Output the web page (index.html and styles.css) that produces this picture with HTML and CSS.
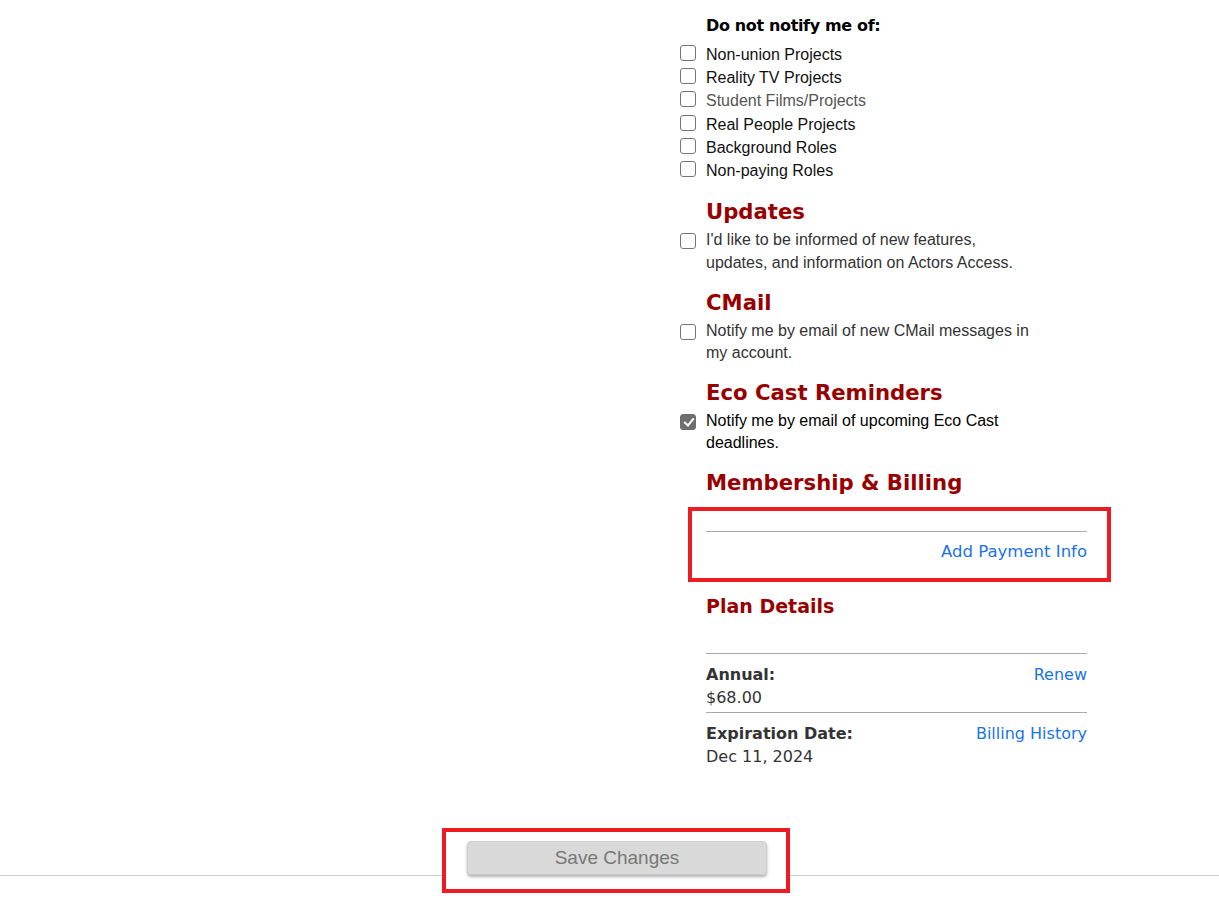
FILE: index.html
```html
<!DOCTYPE html>
<html lang="en">
<head>
    <meta charset="UTF-8">
    <meta name="viewport" content="width=device-width, initial-scale=1.0">
    <title>Account Settings</title>
    <link rel="stylesheet" href="styles.css">
</head>
<body>
    <div class="page">
        <div class="side"></div>

        <div class="settings">
            <p class="list-title">Do not notify me of:</p>
            <ul class="opt-list">
                <li><input type="checkbox" class="check"><span>Non-union Projects</span></li>
                <li><input type="checkbox" class="check"><span>Reality TV Projects</span></li>
                <li class="muted"><input type="checkbox" class="check"><span>Student Films/Projects</span></li>
                <li><input type="checkbox" class="check"><span>Real People Projects</span></li>
                <li><input type="checkbox" class="check"><span>Background Roles</span></li>
                <li><input type="checkbox" class="check"><span>Non-paying Roles</span></li>
            </ul>

            <h2 class="sec-title first">Updates</h2>
            <label class="opt-para">
                <input type="checkbox" class="check">
                <span>I'd like to be informed of new features, updates, and information on Actors Access.</span>
            </label>

            <h2 class="sec-title">CMail</h2>
            <label class="opt-para">
                <input type="checkbox" class="check">
                <span>Notify me by email of new CMail messages in my account.</span>
            </label>

            <h2 class="sec-title">Eco Cast Reminders</h2>
            <label class="opt-para on">
                <input type="checkbox" class="check" checked>
                <span>Notify me by email of upcoming Eco Cast deadlines.</span>
            </label>

            <h2 class="sec-title">Membership &amp; Billing</h2>
            <div class="mark payment">
                <hr class="rule">
                <div class="payment-link"><a href="#">Add Payment Info</a></div>
            </div>

            <h3 class="plan-title">Plan Details</h3>
            <div class="plan">
                <div class="plan-row">
                    <div>
                        <strong>Annual:</strong><br>
                        $68.00
                    </div>
                    <a href="#">Renew</a>
                </div>
                <div class="plan-row">
                    <div>
                        <strong>Expiration Date:</strong><br>
                        Dec 11, 2024
                    </div>
                    <a href="#">Billing History</a>
                </div>
            </div>
        </div>
    </div>

    <div class="footer">
        <div class="line left"></div>
        <div class="mark save">
            <button class="save-btn" disabled>Save Changes</button>
        </div>
        <div class="line"></div>
    </div>
</body>
</html>
```

FILE: styles.css
```css
body {
    margin: 0;
    font-family: "Liberation Sans", Arial, sans-serif;
    font-size: 16px;
    color: #111;
    background-color: #fff;
    height: 917px;
    overflow: hidden;
}

a {
    color: #1a73e8;
    text-decoration: none;
}

.page {
    display: grid;
    grid-template-columns: 680px 407px;
}

.settings {
    padding-left: 26px;
}

.list-title {
    margin: 16px 0 0;
    font-family: "DejaVu Sans", Verdana, sans-serif;
    font-weight: bold;
    letter-spacing: -0.35px;
    line-height: 20px;
    color: #000;
}

.opt-list {
    list-style: none;
    margin: 7px 0 0 -26px;
    padding: 0;
}

.opt-list li {
    display: flex;
    gap: 10px;
    line-height: 23.2px;
    color: #111;
}

.opt-list li .check {
    margin-top: 2px;
}

.opt-list li.muted {
    color: #555;
}

.check {
    appearance: none;
    -webkit-appearance: none;
    flex: none;
    width: 16px;
    height: 16px;
    margin: 0;
    border: 1px solid #767676;
    border-radius: 3px;
    background-color: #fff;
    position: relative;
}

.check:checked {
    background-color: #6e6e6e;
    border-color: #6e6e6e;
}

.check:checked::after {
    content: "";
    position: absolute;
    left: 4.5px;
    top: 1px;
    width: 4px;
    height: 8px;
    border: solid #fff;
    border-width: 0 2.5px 2.5px 0;
    transform: rotate(40deg);
}

.sec-title {
    margin: 15.5px 0 4px;
    font-family: "DejaVu Sans", Verdana, sans-serif;
    font-size: 21.2px;
    line-height: 26px;
    font-weight: bold;
    color: #990000;
}

.sec-title.first {
    margin-top: 17px;
}

.opt-para {
    display: flex;
    gap: 10px;
    margin-left: -26px;
    line-height: 22.4px;
    color: #333;
}

.opt-para span {
    width: 330px;
}

.opt-para .check {
    margin-top: 4px;
}

.opt-para.on {
    color: #000;
}

/* red annotation boxes */
.mark {
    border: 4px solid #ed1c24;
    background-color: #fff;
}

.payment {
    margin: 11px -24px 0 -18px;
    padding: 20px 20px 15px 14px;
}

.rule {
    margin: 0;
    border: none;
    border-top: 1px solid #aaa;
}

.payment-link {
    margin-top: 9px;
    text-align: right;
    font-family: "DejaVu Sans", Verdana, sans-serif;
    font-size: 16.5px;
    line-height: 22px;
}

.plan-title {
    margin: 12px 0 35px;
    font-family: "DejaVu Sans", Verdana, sans-serif;
    font-size: 19px;
    line-height: 24px;
    font-weight: bold;
    color: #990000;
}

.plan {
    border-top: 1px solid #aaa;
    font-family: "DejaVu Sans", Verdana, sans-serif;
    color: #333;
    line-height: 23px;
}

.plan-row {
    display: flex;
    justify-content: space-between;
    align-items: flex-start;
    padding: 9px 0 3px;
}

.plan-row + .plan-row {
    border-top: 1px solid #aaa;
}

.footer {
    display: flex;
    align-items: flex-start;
    margin-top: 57px;
}

.line {
    flex: 1;
    height: 1px;
    margin-top: 47px;
    background-color: #ccc;
}

.line.left {
    flex: none;
    width: 442px;
}

.save {
    padding: 9px 19px 14px 21px;
}

.save-btn {
    display: block;
    width: 300px;
    height: 34px;
    border: 1px solid #cfcfcf;
    border-radius: 4px;
    background-color: #d9d9d9;
    box-shadow: 0 2px 3px rgba(0, 0, 0, 0.3);
    font-family: "Liberation Sans", Arial, sans-serif;
    font-size: 19px;
    color: #777;
}
```
